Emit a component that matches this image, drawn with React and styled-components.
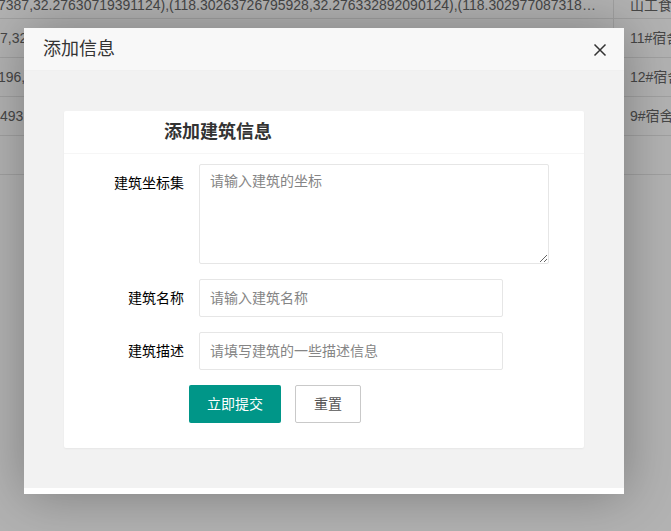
import React from "react";
import styled, { createGlobalStyle } from "styled-components";

const FONT = `"Liberation Sans", "Noto Sans CJK SC", Arial, sans-serif`;

const GlobalStyle = createGlobalStyle`
  html, body { margin: 0; padding: 0; background: #fff; }
  body { font-family: ${FONT}; font-size: 14px; color: #666; overflow: hidden; }
  * { box-sizing: border-box; }
`;

const Page = styled.div`
  position: relative;
  width: 671px;
  height: 531px;
  overflow: hidden;
  background: #fff;
`;

const BgTable = styled.div`
  display: grid;
  grid-template-columns: 614px 1fr;
`;

const Cell = styled.div`
  height: ${(p) => (p.$first ? 19 : 39)}px;
  line-height: ${(p) => (p.$first ? 10 : 38)}px;
  border-bottom: 1px solid #e6e6e6;
  border-right: ${(p) => (p.$left ? "1px solid #e6e6e6" : "none")};
  padding: ${(p) => (p.$left ? "0 15px 0 0" : "0 0 0 16px")};
  white-space: nowrap;
  overflow: hidden;
  text-overflow: ${(p) => (p.$left ? "ellipsis" : "clip")};
  color: #666;
  font-size: 14px;
`;

const Clip = styled.span`
  margin-left: ${(p) => p.$shift || 0}px;
`;

const Shade = styled.div`
  position: absolute;
  inset: 0;
  background: rgba(0, 0, 0, 0.3);
`;

const Layer = styled.div`
  position: absolute;
  left: 24px;
  top: 28px;
  width: 600px;
  height: 466px;
  background: #fff;
  box-shadow: 1px 1px 50px rgba(0, 0, 0, 0.3);
  display: flex;
  flex-direction: column;
`;

const LayerTitle = styled.div`
  position: relative;
  height: 43px;
  line-height: 42px;
  padding: 0 80px 0 19px;
  background: #f8f8f8;
  border-bottom: 1px solid #f0f0f0;
  color: #333;
  font-size: 18px;
`;

const CloseBtn = styled.span`
  position: absolute;
  right: 17px;
  top: 15px;
  width: 14px;
  height: 14px;
  display: flex;
  line-height: 0;
  cursor: pointer;
`;

const LayerBody = styled.div`
  height: 417px;
  background: #f2f2f2;
  padding: 40px;
`;

const Card = styled.div`
  background: #fff;
  border-radius: 2px;
  box-shadow: 0 1px 2px 0 rgba(0, 0, 0, 0.05);
`;

const CardHeader = styled.div`
  height: 43px;
  line-height: 42px;
  padding-left: 100px;
  border-bottom: 1px solid #f6f6f6;
  color: #333;
  font-size: 18px;
  font-weight: bold;
`;

const CardBody = styled.div`
  padding: 10px 15px;
`;

const FormItem = styled.div`
  display: flex;
  align-items: flex-start;
  margin-bottom: 15px;
`;

const Label = styled.label`
  width: 120px;
  flex: none;
  padding: 9px 15px;
  line-height: 20px;
  text-align: right;
  color: #000;
  font-size: 14px;
`;

const fieldBase = `
  border: 1px solid #e6e6e6;
  border-radius: 2px;
  background: #fff;
  color: #333;
  font-family: ${FONT};
  font-size: 14px;
  outline: none;
  &::placeholder { color: #858585; }
`;

const TextArea = styled.textarea`
  ${fieldBase}
  display: block;
  width: 350px;
  height: 100px;
  padding: 6px 10px;
  line-height: 20px;
  resize: vertical;
  margin: 0;
`;

const Input = styled.input`
  ${fieldBase}
  display: block;
  width: 304px;
  height: 38px;
  padding: 0 10px;
  line-height: 1.3;
  margin: 0;
`;

const BtnRow = styled.div`
  display: flex;
  gap: 14px;
  margin: 0 0 15px 110px;
`;

const Button = styled.button`
  height: 38px;
  line-height: ${(p) => (p.$primary ? 38 : 36)}px;
  padding: 0 18px;
  border-radius: 2px;
  font-family: ${FONT};
  font-size: 14px;
  cursor: pointer;
  border: ${(p) => (p.$primary ? "none" : "1px solid #c9c9c9")};
  background: ${(p) => (p.$primary ? "#009688" : "#fff")};
  color: ${(p) => (p.$primary ? "#fff" : "#555")};
`;

const rows = [
  { left: "7387,32.27630719391124),(118.30263726795928,32.276332892090124),(118.302977087318,32.2763123", right: "山工食堂", shift: -2, first: true },
  { left: "7,32.27628819391124),(118.30263726795928,32.276332892090124)", right: "11#宿舍楼", shift: 0 },
  { left: "196,32.27630719391124),(118.30263726795928,32.276332892090124)", right: "12#宿舍楼", shift: -2 },
  { left: "493,32.27630719391124),(118.30263726795928,32.276332892090124)", right: "9#宿舍楼", shift: 0 },
  { left: "", right: "", shift: 0 },
];

export default function App() {
  return (
    <Page>
      <GlobalStyle />
      <BgTable>
        {rows.map((r, i) => (
          <React.Fragment key={i}>
            <Cell $left $first={r.first}>
              <Clip $shift={r.shift}>{r.left}</Clip>
            </Cell>
            <Cell $first={r.first}>{r.right}</Cell>
          </React.Fragment>
        ))}
      </BgTable>
      <Shade />
      <Layer>
        <LayerTitle>
          添加信息
          <CloseBtn>
            <svg width="14" height="14" viewBox="0 0 14 14">
              <path d="M1.5 1.5 L12.5 12.5 M12.5 1.5 L1.5 12.5" stroke="#333" strokeWidth="1.5" fill="none" />
            </svg>
          </CloseBtn>
        </LayerTitle>
        <LayerBody>
          <Card>
            <CardHeader>添加建筑信息</CardHeader>
            <CardBody>
              <FormItem>
                <Label>建筑坐标集</Label>
                <TextArea placeholder="请输入建筑的坐标" />
              </FormItem>
              <FormItem>
                <Label>建筑名称</Label>
                <Input placeholder="请输入建筑名称" />
              </FormItem>
              <FormItem>
                <Label>建筑描述</Label>
                <Input placeholder="请填写建筑的一些描述信息" />
              </FormItem>
              <BtnRow>
                <Button $primary>立即提交</Button>
                <Button>重置</Button>
              </BtnRow>
            </CardBody>
          </Card>
        </LayerBody>
      </Layer>
    </Page>
  );
}
